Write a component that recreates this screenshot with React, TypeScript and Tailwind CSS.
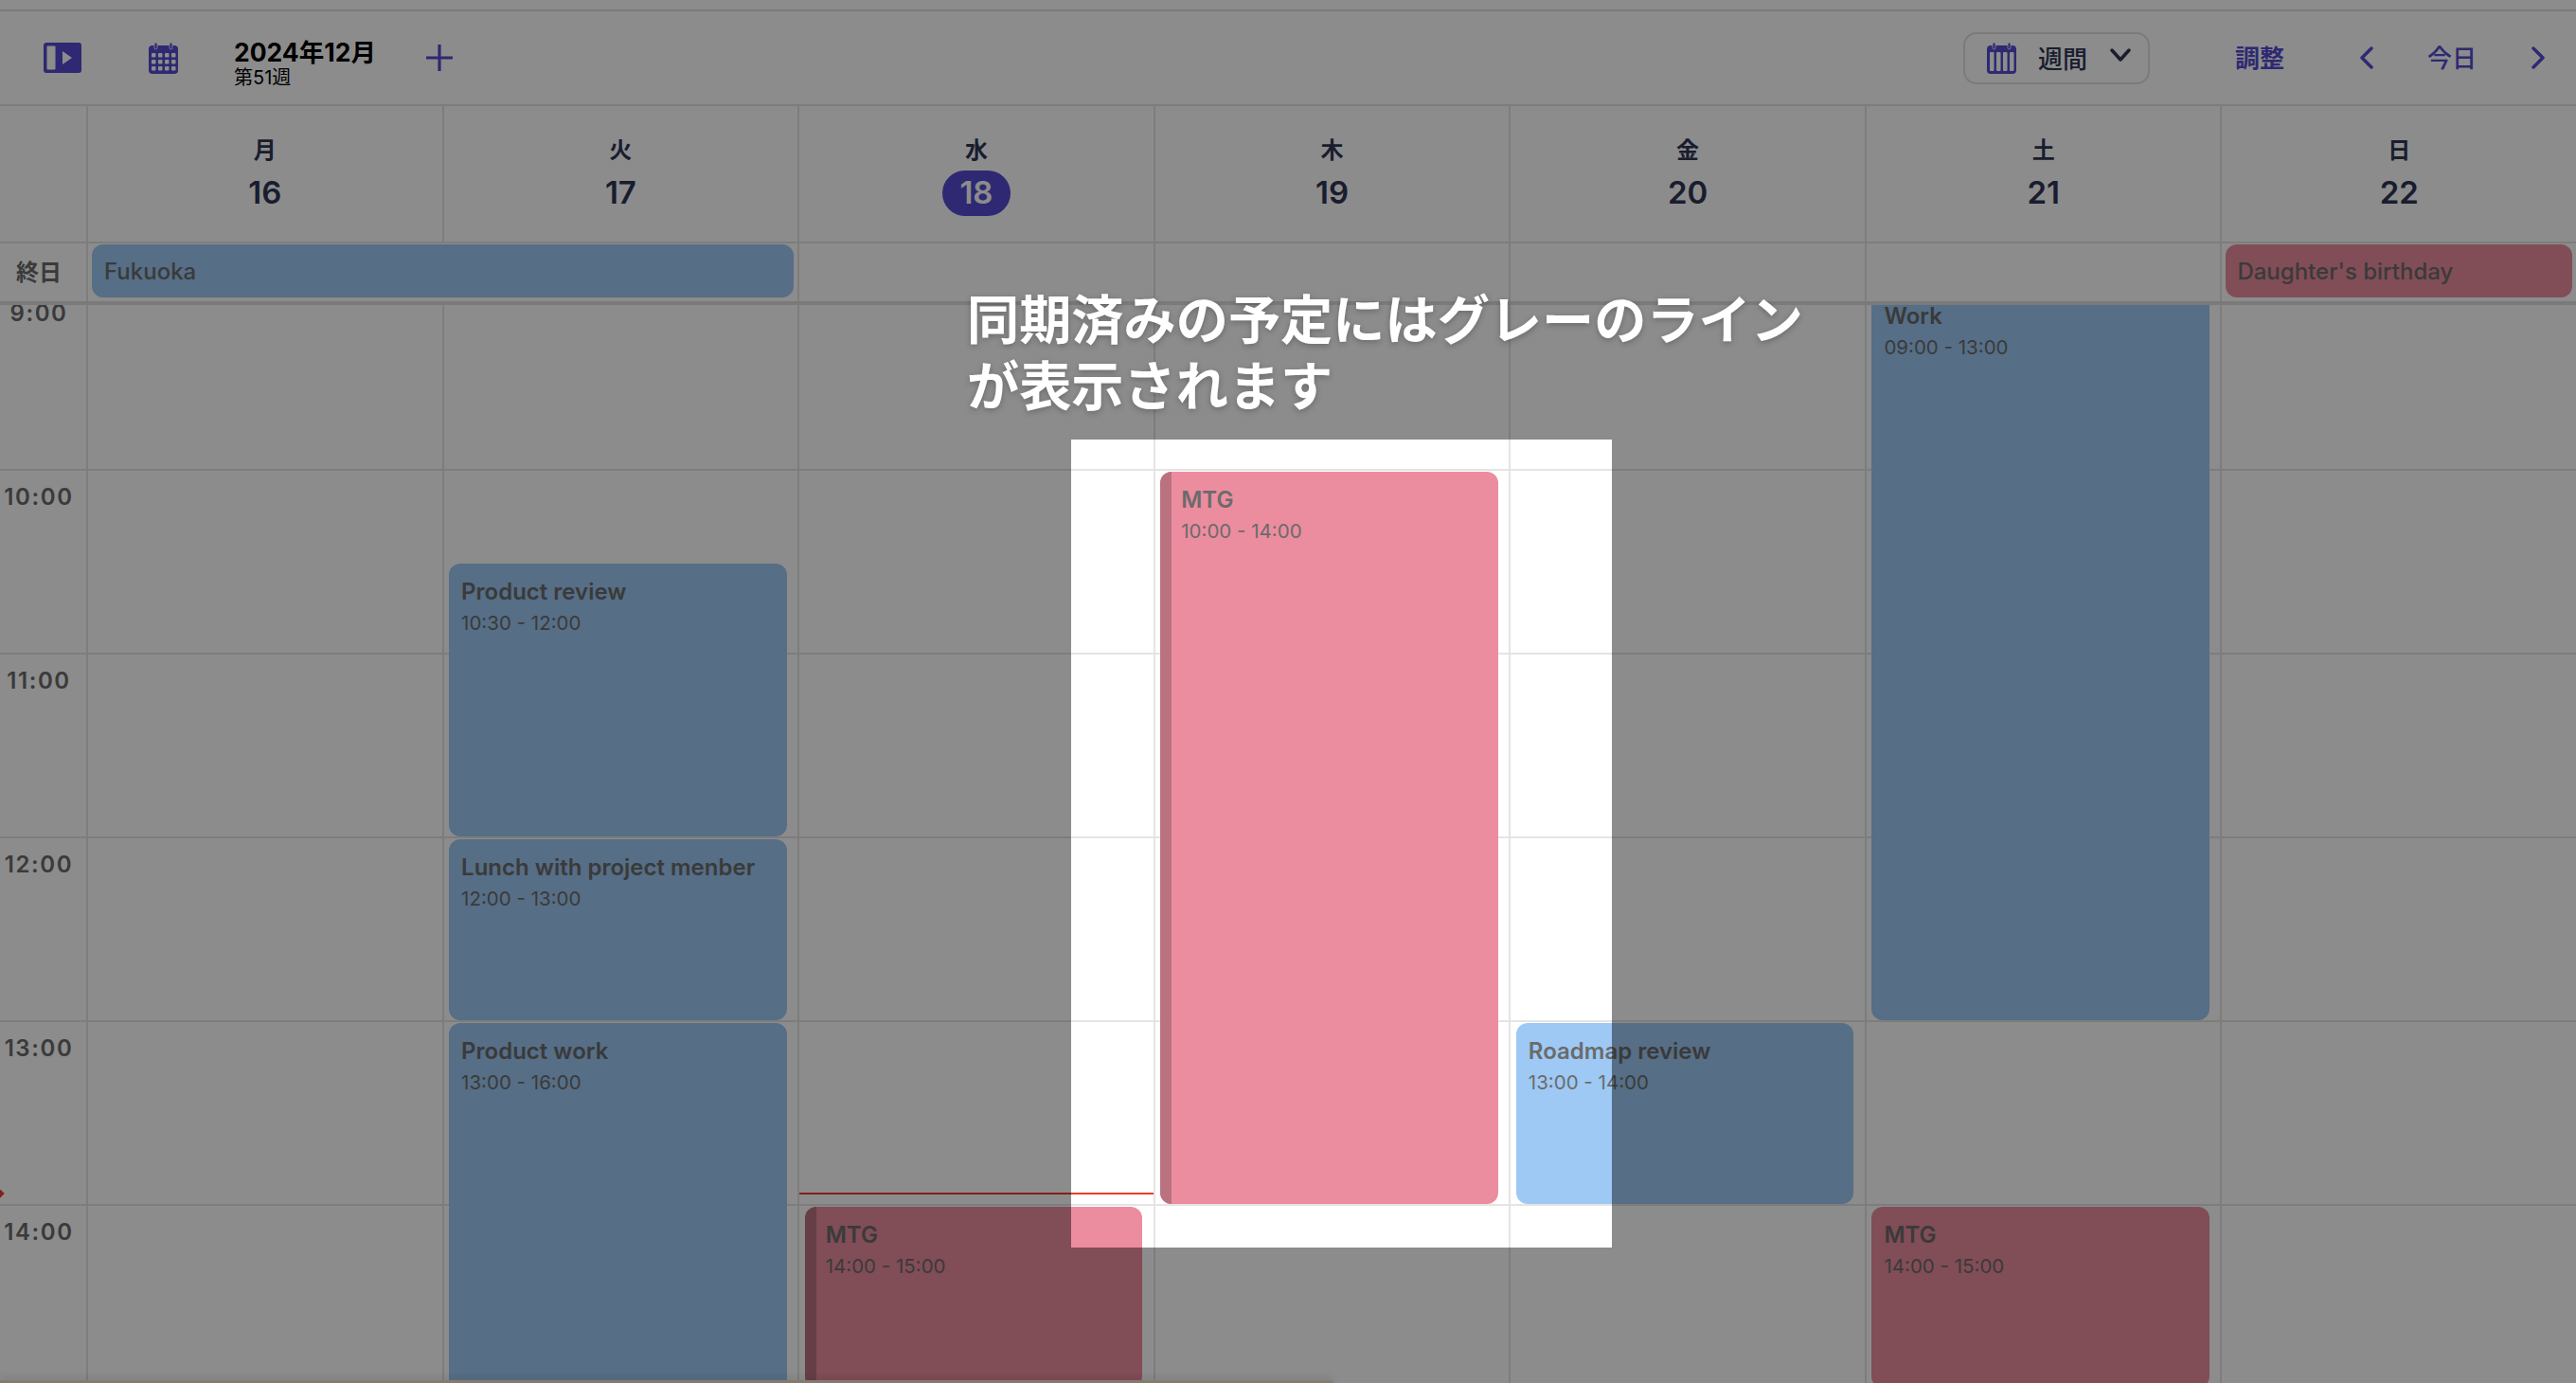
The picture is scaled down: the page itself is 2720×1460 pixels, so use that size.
import React from "react";

const HOUR = 194;
const FONT = "font-['Inter','Noto_Sans_CJK_JP',sans-serif]";

interface CalEvent {
  title: string;
  time: string;
  start: number;
  end: number;
  color: "blue" | "red";
  synced?: boolean;
}

const days: { label: string; date: number; today?: boolean; events: CalEvent[] }[] = [
  { label: "月", date: 16, events: [] },
  {
    label: "火",
    date: 17,
    events: [
      { title: "Product review", time: "10:30 - 12:00", start: 10.5, end: 12, color: "blue" },
      { title: "Lunch with project menber", time: "12:00 - 13:00", start: 12, end: 13, color: "blue" },
      { title: "Product work", time: "13:00 - 16:00", start: 13, end: 16, color: "blue" },
    ],
  },
  {
    label: "水",
    date: 18,
    today: true,
    events: [{ title: "MTG", time: "14:00 - 15:00", start: 14, end: 15, color: "red", synced: true }],
  },
  {
    label: "木",
    date: 19,
    events: [{ title: "MTG", time: "10:00 - 14:00", start: 10, end: 14, color: "red", synced: true }],
  },
  {
    label: "金",
    date: 20,
    events: [{ title: "Roadmap review", time: "13:00 - 14:00", start: 13, end: 14, color: "blue" }],
  },
  {
    label: "土",
    date: 21,
    events: [
      { title: "Work", time: "09:00 - 13:00", start: 9, end: 13, color: "blue" },
      { title: "MTG", time: "14:00 - 15:00", start: 14, end: 15, color: "red" },
    ],
  },
  { label: "日", date: 22, events: [] },
];

const hours = [9, 10, 11, 12, 13, 14];

const PanelIcon = () => (
  <svg width="40" height="32" viewBox="0 0 40 32">
    <rect width="40" height="32" rx="3" fill="#554ccf" />
    <rect x="3.5" y="3.5" width="9" height="25" rx="1" fill="#fff" />
    <path d="M20 9l10 7-10 7z" fill="#fff" />
  </svg>
);

const MonthIcon = () => (
  <svg width="31" height="33" viewBox="0 0 31 33">
    <rect y="3" width="31" height="30" rx="4" fill="#554ccf" />
    <rect x="6" y="0" width="3" height="7" rx="1.5" fill="#554ccf" stroke="#fff" strokeWidth="0.8" />
    <rect x="22" y="0" width="3" height="7" rx="1.5" fill="#554ccf" stroke="#fff" strokeWidth="0.8" />
    {[11, 18, 25].map((y) =>
      [3, 10, 17, 24].map((x) => <rect key={`${x}-${y}`} x={x} y={y} width="4.5" height="4.5" rx="1" fill="#fff" />),
    )}
  </svg>
);

const WeekIcon = () => (
  <svg width="31" height="33" viewBox="0 0 31 33">
    <rect y="3" width="31" height="30" rx="4" fill="#554ccf" />
    <rect x="6" y="0" width="3" height="7" rx="1.5" fill="#554ccf" stroke="#fff" strokeWidth="0.8" />
    <rect x="22" y="0" width="3" height="7" rx="1.5" fill="#554ccf" stroke="#fff" strokeWidth="0.8" />
    {[3, 10, 17, 24].map((x) => (
      <rect key={x} x={x} y="10" width="4.5" height="20" rx="1" fill="#fff" />
    ))}
  </svg>
);

const PlusIcon = () => (
  <svg width="28" height="28" viewBox="0 0 28 28" stroke="#554ccf" strokeWidth="3.2" strokeLinecap="butt">
    <path d="M14 0v28M0 14h28" />
  </svg>
);

const Chevron = ({ dir }: { dir: "left" | "right" }) => (
  <svg width="16" height="24" viewBox="0 0 16 24" fill="none" stroke="#554ccf" strokeWidth="3.5" strokeLinecap="round" strokeLinejoin="round">
    <path d={dir === "left" ? "M13 2L3 12l10 10" : "M3 2l10 10L3 22"} />
  </svg>
);

const EventCard = ({ event }: { event: CalEvent }) => (
  <div
    className={`absolute left-[5.5px] right-[11.5px] overflow-hidden rounded-[12px] pt-[14px] text-[#6b6b6b] ${
      event.color === "red" ? "bg-[#ec8c9f]" : "bg-[#9dc9f4]"
    } ${event.synced ? "pl-[22px]" : "pl-[13px]"}`}
    style={{ top: (event.start - 9) * HOUR + 3, height: (event.end - event.start) * HOUR - 3 }}
  >
    {event.synced && <div className="absolute inset-y-0 left-0 w-[12px] bg-[#ba7280]" />}
    <div className="text-[24px] leading-[32px] font-semibold">{event.title}</div>
    <div className="mt-[1px] text-[20.5px] leading-[32px] font-normal">{event.time}</div>
  </div>
);

export default function App() {
  return (
    <div className={`relative flex h-[1460px] w-[2720px] flex-col overflow-hidden bg-white ${FONT}`}>
      <div className="h-[12px] shrink-0 border-b-2 border-[#dedede]" />

      {/* toolbar */}
      <div className="flex h-[100px] shrink-0 items-center border-b-2 border-[#e4e4e4]">
        <div className="ml-[46px]">
          <PanelIcon />
        </div>
        <div className="ml-[71px]">
          <MonthIcon />
        </div>
        <div className="ml-[59px] flex w-[146px] flex-col pt-[10px]">
          <span className="text-[26.5px] leading-[30px] font-bold whitespace-nowrap text-black">2024年12月</span>
          <span className="mt-[1px] text-[20px] leading-[22px] whitespace-nowrap text-black">第51週</span>
        </div>
        <div className="ml-[57px]">
          <PlusIcon />
        </div>
        <div className="ml-auto flex h-[55px] w-[197px] items-center rounded-[14px] border-2 border-[#e0e0e0] pl-[23px]">
          <WeekIcon />
          <span className="ml-[23px] pt-[4px] text-[26px] leading-none font-medium text-[#2f3554]">週間</span>
          <svg className="mb-[6px] ml-[24px]" width="22" height="14" viewBox="0 0 22 14" fill="none" stroke="#2f3554" strokeWidth="3.5" strokeLinecap="round" strokeLinejoin="round">
            <path d="M2 2l9 10 9-10" />
          </svg>
        </div>
        <span className="ml-[90px] pt-[1px] text-[26px] font-bold text-[#554ccf]">調整</span>
        <div className="ml-[79px]">
          <Chevron dir="left" />
        </div>
        <span className="ml-[56px] pt-[1px] text-[26px] font-medium text-[#554ccf]">今日</span>
        <div className="mr-[32px] ml-[57px]">
          <Chevron dir="right" />
        </div>
      </div>

      {/* day headers */}
      <div className="flex h-[145px] shrink-0 border-b-2 border-[#e4e4e4]">
        <div className="w-[91px] shrink-0" />
        {days.map((d) => (
          <div key={d.date} className="flex flex-1 flex-col items-center border-l-2 border-[#e4e4e4] pt-[30px]">
            <span className="text-[24px] leading-[34px] font-semibold text-[#2f3554]">{d.label}</span>
            <span
              className={`mt-[4px] flex h-[48px] w-[72px] items-center justify-center rounded-full text-[33px] font-semibold ${
                d.today ? "bg-[#554ccf] text-white" : "text-[#2f3554]"
              }`}
            >
              {d.date}
            </span>
          </div>
        ))}
      </div>

      {/* all day row */}
      <div className="flex h-[65px] shrink-0 border-b-4 border-[#dedede]">
        <div className="flex w-[91px] shrink-0 items-center pl-[17px] text-[24px] font-semibold text-[#6b6b6b]">終日</div>
        <div className="grid flex-1 grid-cols-7">
          <div className="col-span-2 border-l-2 border-[#e4e4e4] pt-[1px] pr-[4px] pl-[4px]">
            <div className="flex h-[56px] items-center rounded-[12px] bg-[#9dc9f4] pt-[2px] pl-[13px] text-[24px] font-medium text-[#6b6b6b]">Fukuoka</div>
          </div>
          {[0, 1, 2, 3].map((i) => (
            <div key={i} className="border-l-2 border-[#e4e4e4]" />
          ))}
          <div className="border-l-2 border-[#e4e4e4] pt-[1px] pr-[4px] pl-[4px]">
            <div className="flex h-[56px] items-center rounded-[12px] bg-[#ec8c9f] pt-[2px] pl-[12px] text-[24px] font-medium text-[#6b6b6b]">Daughter's birthday</div>
          </div>
        </div>
      </div>

      {/* time grid, scrolled 20px past 9:00 */}
      <div className="min-h-0 flex-1 overflow-hidden">
        <div className="mt-[-21px] flex">
          <div className="w-[91px] shrink-0">
            {hours.map((h) => (
              <div key={h} className="h-[194px] border-t-2 border-[#e4e4e4]">
                <div className="mt-[11px] w-[82px] text-center text-[24px] leading-[34px] font-semibold tracking-[1.6px] text-[#6b6b6b]">{h}:00</div>
              </div>
            ))}
          </div>
          {days.map((d) => (
            <div key={d.date} className="relative flex-1 border-l-2 border-[#e4e4e4]">
              {hours.map((h) => (
                <div key={h} className="h-[194px] border-t-2 border-[#e4e4e4]" />
              ))}
              {d.events.map((e) => (
                <EventCard key={e.title + e.start} event={e} />
              ))}
              {d.today && <div className="absolute inset-x-0 top-[958px] h-[2px] bg-[#ef3b2f]" />}
            </div>
          ))}
        </div>
      </div>

      {/* now marker */}
      <div className="absolute top-[1256px] left-[-5px] h-[8px] w-[8px] rotate-45 bg-[#ef3b2f]" />

      {/* sheet peeking at the bottom */}
      <div className="absolute bottom-0 left-0 h-[3px] w-[1408px] rounded-tr-[4px] bg-[#f2dfca] shadow-[0_-2px_8px_rgba(0,0,0,0.2)]" />

      {/* tutorial overlay */}
      <div className="absolute top-[464px] left-[1131px] h-[853px] w-[571px] shadow-[0_0_0_4000px_rgba(0,0,0,0.45)]" />
      <div className="absolute top-[303px] left-[1021px] w-[900px] text-[55.2px] leading-[70px] font-semibold text-white [text-shadow:0_2px_6px_rgba(0,0,0,0.25)]">
        同期済みの予定にはグレーのライン
        <br />
        が表示されます
      </div>
    </div>
  );
}
